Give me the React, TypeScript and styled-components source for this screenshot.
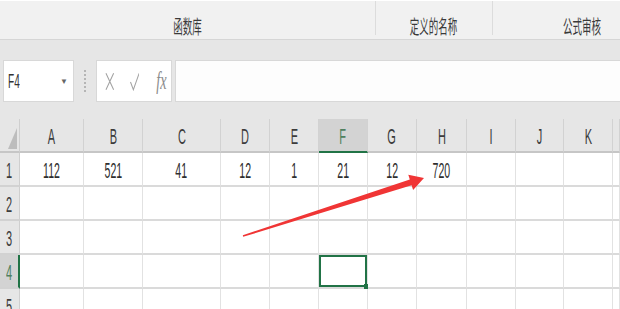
import React from "react";
import styled, { createGlobalStyle } from "styled-components";

const GlobalStyle = createGlobalStyle`
  html, body {
    margin: 0;
    padding: 0;
    background: #ffffff;
    overflow: hidden;
  }
  * {
    box-sizing: border-box;
  }
`;

const Page = styled.div`
  position: relative;
  width: 620px;
  height: 309px;
  overflow: hidden;
  font-family: "Liberation Sans", "Noto Sans CJK SC", sans-serif;
  color: #333;
`;

// squished look of the screenshot
const Narrow = styled.span<{ $scale?: number; $origin?: string }>`
  display: inline-block;
  white-space: nowrap;
  transform: scaleX(${(p) => p.$scale ?? 0.48});
  transform-origin: ${(p) => p.$origin ?? "center"};
`;

const Ribbon = styled.div`
  display: flex;
  height: 40px;
  background: #f1f1f1;
  border-top: 1px solid #ffffff;
  border-bottom: 1px solid #d6d6d6;
`;

const RibbonGroup = styled.div<{ $width: number }>`
  flex: 0 0 ${(p) => p.$width}px;
  height: 34px;
  display: flex;
  align-items: center;
  justify-content: center;
  padding-top: 14px;
  border-right: 1px solid #dcdcdc;
  font-family: "Noto Sans CJK SC", sans-serif;
  font-size: 19px;
  color: #3a3a3a;
`;

const FormulaArea = styled.div`
  height: 79px;
  background: #e6e6e6;
  display: flex;
  align-items: flex-start;
  padding-top: 20px;
`;

const NameBox = styled.div`
  position: relative;
  margin-left: 3px;
  width: 71px;
  height: 42px;
  background: #fff;
  border: 1px solid #d8d8d8;
  display: flex;
  align-items: center;
  padding-left: 4px;
  font-size: 21px;
  color: #333;
`;

const DropArrow = styled.span`
  margin-left: auto;
  margin-right: 5px;
  font-size: 8px;
  color: #666;
`;

const Dots = styled.div`
  margin: 10px 10px 0 10px;
  height: 22px;
  border-left: 2px dotted #b5b5b5;
`;

const FxBox = styled.div`
  width: 76px;
  height: 42px;
  background: #fff;
  border: 1px solid #d8d8d8;
  display: flex;
  align-items: center;
  padding-left: 8px;
  gap: 15px;
`;

const FxText = styled.span`
  font-family: "Liberation Serif", serif;
  font-style: italic;
  font-size: 26px;
  color: #8c8c8c;
  margin-left: -2px;
`;

const FormulaInput = styled.div`
  flex: 1;
  margin-left: 3px;
  height: 42px;
  background: #fdfdfd;
  border-top: 1px solid #d8d8d8;
  border-bottom: 1px solid #d8d8d8;
  border-left: 1px solid #d8d8d8;
`;

const Sheet = styled.div`
  display: grid;
  grid-template-columns: 20px 64px 59px 78px 49px 49px 49px 49px 50px 49px 48px 49px 1fr;
  grid-auto-rows: 34px;
`;

const Corner = styled.div`
  position: relative;
  background: #e6e6e6;
  border-right: 1px solid #cfcfcf;
  border-bottom: 2px solid #c6c6c6;
`;

const CornerMark = styled.div`
  position: absolute;
  right: 2px;
  bottom: 2px;
  width: 0;
  height: 0;
  border-left: 9px solid transparent;
  border-bottom: 21px solid #bdbdbd;
`;

const ColHeader = styled.div<{ $active?: boolean }>`
  display: flex;
  align-items: center;
  justify-content: center;
  padding-top: 4px;
  background: ${(p) => (p.$active ? "#d3d3d3" : "#e6e6e6")};
  border-right: 1px solid #d2d2d2;
  border-bottom: 2px solid ${(p) => (p.$active ? "#217346" : "#c6c6c6")};
  font-size: 22px;
  color: ${(p) => (p.$active ? "#4f7f5e" : "#3c3c3c")};
`;

const RowHeader = styled.div<{ $active?: boolean }>`
  display: flex;
  align-items: center;
  justify-content: center;
  padding-top: 4px;
  background: ${(p) => (p.$active ? "#d3d3d3" : "#e6e6e6")};
  border-right: ${(p) => (p.$active ? "2px solid #217346" : "1px solid #cfcfcf")};
  border-bottom: 2px solid #d2d2d2;
  font-size: 22px;
  color: ${(p) => (p.$active ? "#4f7f5e" : "#3c3c3c")};
`;

const Cell = styled.div<{ $selected?: boolean }>`
  position: relative;
  display: flex;
  align-items: center;
  justify-content: center;
  padding-top: 4px;
  background: #fff;
  border-right: 1px solid #e2e2e2;
  border-bottom: 2px solid #dadada;
  font-size: 22px;
  color: #2e2e2e;
  box-shadow: ${(p) => (p.$selected ? "inset 0 0 0 2px #217346" : "none")};
`;

const FillHandle = styled.div`
  position: absolute;
  right: -2px;
  bottom: -3px;
  width: 5px;
  height: 6px;
  background: #217346;
`;

const ArrowLayer = styled.svg`
  position: absolute;
  left: 0;
  top: 0;
  pointer-events: none;
`;

const columns = ["A", "B", "C", "D", "E", "F", "G", "H", "I", "J", "K", ""];
const firstRow = ["112", "521", "41", "12", "1", "21", "12", "720", "", "", "", ""];
const rows = [1, 2, 3, 4, 5];
const activeCol = 5;
const activeRow = 4;

export default function App() {
  return (
    <Page>
      <GlobalStyle />
      <Ribbon>
        <RibbonGroup $width={376}>
          <Narrow $scale={0.5}>函数库</Narrow>
        </RibbonGroup>
        <RibbonGroup $width={117}>
          <Narrow $scale={0.5}>定义的名称</Narrow>
        </RibbonGroup>
        <RibbonGroup $width={180}>
          <Narrow $scale={0.5}>公式审核</Narrow>
        </RibbonGroup>
      </Ribbon>

      <FormulaArea>
        <NameBox>
          <Narrow $scale={0.48} $origin="left">F4</Narrow>
          <DropArrow>▼</DropArrow>
        </NameBox>
        <Dots />
        <FxBox>
          <svg width="10" height="19" viewBox="0 0 10 19">
            <path d="M1 1 L9 18 M9 1 L1 18" stroke="#a3a3a3" strokeWidth="1.1" fill="none" />
          </svg>
          <svg width="10" height="19" viewBox="0 0 10 19">
            <path d="M0.5 10 L3.5 18 L9.5 1" stroke="#a3a3a3" strokeWidth="1.1" fill="none" />
          </svg>
          <FxText>
            <Narrow $scale={0.55}>fx</Narrow>
          </FxText>
        </FxBox>
        <FormulaInput />
      </FormulaArea>

      <Sheet>
        <Corner>
          <CornerMark />
        </Corner>
        {columns.map((c, i) => (
          <ColHeader key={"h" + i} $active={i === activeCol}>
            <Narrow $scale={0.5}>{c}</Narrow>
          </ColHeader>
        ))}
        {rows.map((r) => (
          <React.Fragment key={r}>
            <RowHeader $active={r === activeRow}>
              <Narrow $scale={0.5}>{r}</Narrow>
            </RowHeader>
            {columns.map((_, i) => {
              const selected = r === activeRow && i === activeCol;
              return (
                <Cell key={r + "-" + i} $selected={selected}>
                  {r === 1 && firstRow[i] && <Narrow>{firstRow[i]}</Narrow>}
                  {selected && <FillHandle />}
                </Cell>
              );
            })}
          </React.Fragment>
        ))}
      </Sheet>

      <ArrowLayer width="620" height="309" viewBox="0 0 620 309">
        <polygon
          points="242.8,235.2 409.8,179.4 408.3,174.7 424,178 413.1,189.9 411.6,185.2 243.2,236.8"
          fill="#f03535"
        />
      </ArrowLayer>
    </Page>
  );
}
